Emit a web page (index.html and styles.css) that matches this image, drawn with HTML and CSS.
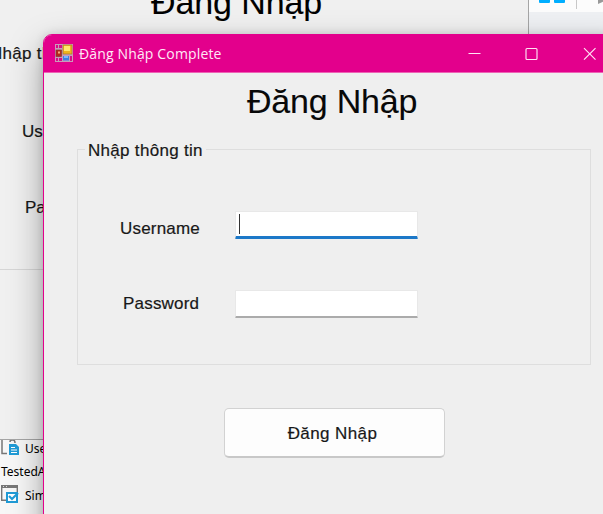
FILE: index.html
```html
<!DOCTYPE html>
<html lang="vi">
<head>
<meta charset="utf-8">
<title>Đăng Nhập Complete</title>
<link rel="stylesheet" href="styles.css">
</head>
<body>
<div class="desktop">
  <div class="toolbar">
    <svg width="75" height="13" viewBox="0 0 75 13">
      <path d="M11 0h11v2q0 1-1 1h-9q-1 0-1-1zM26 0h11v2q0 1-1 1h-9q-1 0-1-1z" fill="#00aeff"/>
      <path d="M48.500 0v9" stroke="#c8c8c8"/>
      <path d="M70 0h9l-9 4z" fill="#999"/>
    </svg>
  </div>
  <div class="tree">
    <div class="row">
      <svg width="20" height="18" viewBox="0 0 20 18" fill="none">
        <path d="M1 0v13.500h5M9 2q0-2 2-2h1q2 0 2 3" stroke="#777" stroke-width="1.500"/>
        <path d="M8 4h7l3 3v8H8z" fill="#209bd6"/>
        <path d="M10 7.500h4M10 10h6M10 12.500h6" stroke="#fff"/>
      </svg><span>Username</span>
    </div>
    <div class="row plain"><span>TestedApps</span></div>
    <div class="row">
      <svg width="20" height="20" viewBox="0 0 20 20" fill="none">
        <path d="M0 0h17v3H0z" fill="#777"/>
        <path d="M.7 2v13.300H5M16.300 2v5" stroke="#777" stroke-width="1.400"/>
        <path d="M2 1.500h1M5 1.500h1" stroke="#ddd"/>
        <rect x="6" y="8" width="10" height="9" fill="#fff" stroke="#209bd6" stroke-width="2"/>
        <path d="M8 11l3 3 6-6" stroke="#209bd6" stroke-width="2.200"/>
      </svg><span>Simple</span>
    </div>
  </div>
  <div class="window back">
    <div class="back-title">Đăng Nhập</div>
    <div class="back-legend">Nhập thông tin</div>
    <div class="back-user">Username</div>
    <div class="back-pass">Password</div>
  </div>
  <div class="window front">
    <div class="titlebar">
      <svg class="app-icon" width="18" height="18" viewBox="0 0 18 18">
        <path d="M0 0h18v18H0z" fill="#c99cb9"/>
        <path d="M1 1h2v3H1zM4 1h3v3H4zM1 14h2v3H1zM4 14h3v3H4zM15 12h2v5h-2z" fill="#d90b87"/>
        <rect x="8" y="1" width="9" height="9" fill="#efb31c" stroke="#a4762b" stroke-width=".7"/>
        <path d="M9 2h6v5H9z" fill="#ffe86c"/>
        <rect x="1" y="6" width="5.500" height="6.500" fill="#b3281c" stroke="#803634" stroke-width=".7"/>
        <path d="M3 7.500h2v2H3z" fill="#f5aa80"/>
        <rect x="8" y="12" width="6" height="4.500" fill="#3f7fe0"/>
        <path d="M9 12h4v2H9z" fill="#78b9ff"/>
      </svg>
      <span class="caption">Đăng Nhập Complete</span>
      <svg class="controls" width="135" height="38" viewBox="0 0 135 38" fill="none" stroke="#ffe3f4" stroke-width="1.150">
        <path d="M.5 18.500h12"/>
        <rect x="58" y="13.500" width="11" height="11" rx="1"/>
        <path d="M116 13.200l11.500 11.500M127.500 13.200L116 24.700"/>
      </svg>
    </div>
    <div class="content">
      <h1>Đăng Nhập</h1>
      <fieldset>
        <legend>Nhập thông tin</legend>
        <div class="form">
          <label class="user-label">Username</label>
          <div class="input focused"><i class="caret"></i></div>
          <label class="pass-label">Password</label>
          <div class="input"></div>
        </div>
      </fieldset>
      <button type="button"><span>Đăng Nhập</span></button>
    </div>
  </div>
</div>
</body>
</html>
```
FILE: styles.css
```css
* { box-sizing: border-box; }
body { margin: 0; font: 17px/20px "Liberation Sans", Arial, sans-serif; color: #181818; -webkit-text-stroke: .2px; }
.desktop { position: relative; width: 603px; height: 514px; overflow: hidden; background: #eef0f3; }
.toolbar { margin-left: 528px; height: 12px; background: #fcfcfc; }
.toolbar svg { display: block; }
.tree { position: absolute; left: 0; top: 440px; width: 200px; height: 74px; background: #f7f7f7; font: 12px/18px "Noto Sans", sans-serif; color: #000; -webkit-text-stroke: 0; }
.row { display: flex; gap: 4px; height: 22px; align-items: flex-start; padding-left: 1px; }
.row.plain { height: 23px; padding-top: 1px; }
.row:last-child span { padding-top: 2px; }
.window { position: absolute; }
.back { left: -20px; top: -60px; width: 549px; height: 500px; background: #f0f0f0; border-right: 1px solid #a5a5a5; border-bottom: 1px solid #a5a5a5; white-space: nowrap; }
.back::after { content: ""; display: block; margin-top: 51px; height: 1px; background: #d6d6d6; }
.back-title { margin: 42px 0 0 171px; font-size: 34px; line-height: 40px; letter-spacing: -.1px; color: #000; -webkit-text-stroke: .1px; }
.back-legend { margin: 22px 0 0 10px; letter-spacing: .3px; }
.back-user { margin: 58px 0 0 42px; }
.back-pass { margin: 56px 0 0 45px; }
.front { left: 43px; top: 34px; width: 582px; height: 540px; background: #efefef; border: 1px solid #e3008c; border-radius: 9px; box-shadow: 0 14px 34px rgba(0,0,0,.34), 0 0 10px rgba(0,0,0,.12); overflow: hidden; }
.titlebar { display: flex; align-items: center; height: 38px; padding-left: 11px; background: #e3008c; border-bottom: 1px solid #ee62b5; }
.app-icon { flex: none; margin-bottom: 1px; }
.controls { flex: none; }
.caption { flex: none; margin-left: 6px; width: 389px; color: #ffe9f6; font: 14px/20px "Open Sans", "Noto Sans", sans-serif; letter-spacing: .15px; white-space: nowrap; -webkit-text-stroke: 0; }
.content { display: flex; flex-direction: column; align-items: flex-start; padding-left: 33px; }
h1 { margin: 8px 0 0 170px; font-size: 34px; line-height: 40px; font-weight: 400; letter-spacing: -.2px; color: #080808; white-space: nowrap; -webkit-text-stroke: .1px; }
fieldset { margin: 20px 0 0; padding: 0; width: 514px; height: 224px; border: 1px solid #dedede; }
legend { margin-left: 7px; padding: 0 3px; height: 16px; line-height: 20px; letter-spacing: .3px; }
.form { display: grid; grid-template-columns: 115px 183px; column-gap: 42px; row-gap: 51px; padding: 54px 0 0; }
.form label { letter-spacing: .2px; }
.user-label { padding: 8px 0 0 42px; }
.pass-label { padding: 4px 0 0 45px; }
.input { height: 28px; background: #fff; border: 1px solid #e8e8e8; border-bottom: 2px solid #ababab; border-radius: 1px; }
.focused { border-bottom: 3px solid #1c78c8; }
.caret { display: block; width: 1px; height: 20px; margin: 2px 0 0 3px; background: #333; }
button { margin: 43px 0 0 147px; width: 221px; height: 50px; padding: 2px 4px 0 0; background: #fdfdfd; border: 1px solid #d2d2d2; border-bottom: 2px solid #c8c8c8; border-radius: 5px; font: 17px/20px "Liberation Sans", Arial, sans-serif; letter-spacing: .4px; color: #181818; -webkit-text-stroke: .2px; }
```
